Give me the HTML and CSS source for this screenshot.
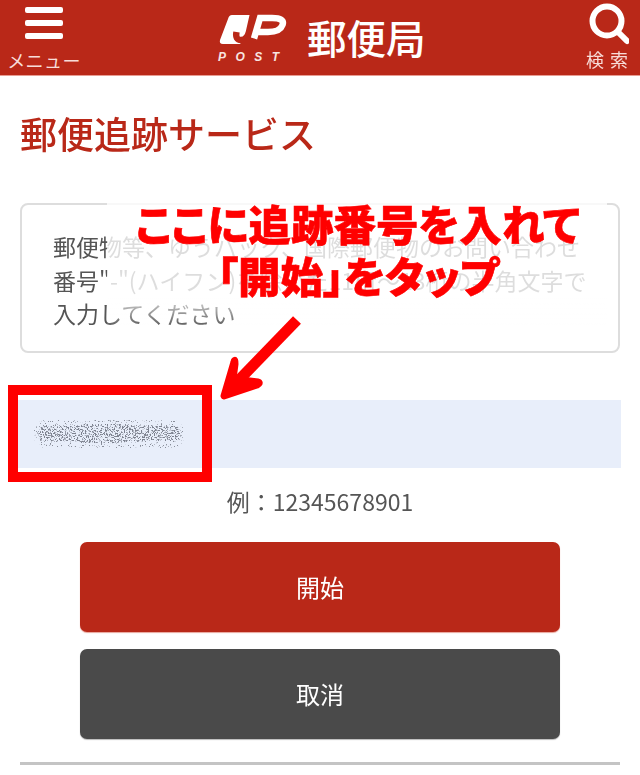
FILE: index.html
```html
<!DOCTYPE html>
<html lang="ja">
<head>
<meta charset="utf-8">
<title>郵便追跡サービス</title>
<link rel="stylesheet" href="styles.css">
</head>
<body>
<div class="page">
  <header class="header">
    <div class="menu">
      <span class="bars"><i></i><i></i><i></i></span>
      <span class="menu-label">メニュー</span>
    </div>
    <div class="brand">
      <div class="logo">
        <svg class="logo-mark" width="70" height="32" viewBox="218 13 70 32" aria-hidden="true">
          <path d="M232 15H255L247 44H223Q219 44 220 40L228 19Q229 15 232 15Z" fill="#fff"/>
          <path d="M254 10L249 32Q247 40 241 40Q235 40 236.500 32" fill="none" stroke="#b92818" stroke-width="6.500"/>
          <path d="M254 10L249 32Q247 40 241 40L240 46H262V10Z" fill="#b92818"/>
          <path d="M254 38.500L260 18H272Q285 18 282.500 25Q280 32 268 32H258" fill="none" stroke="#fff" stroke-width="6.500"/>
        </svg>
        <span class="logo-post">POST</span>
      </div>
      <span class="brand-name">郵便局</span>
    </div>
    <div class="search">
      <svg class="search-icon" width="44" height="46" viewBox="0 0 44 46" aria-hidden="true">
        <circle cx="22" cy="21" r="14.500" fill="none" stroke="#fff" stroke-width="6"/>
        <path d="M33 32L42 41" fill="none" stroke="#fff" stroke-width="6" stroke-linecap="round"/>
      </svg>
      <span class="search-label">検索</span>
    </div>
  </header>

  <main class="main">
    <h1 class="title">郵便追跡サービス</h1>
    <div class="info">郵便物等、ゆうパック、国際郵便物のお問い合わせ<br>番号"-"(ハイフン)を除いた11桁〜13桁の半角文字で<br>入力してください</div>
    <div class="field">
      <svg class="scribble" width="150" height="30" viewBox="0 0 150 30" aria-hidden="true">
        <filter id="grain" x="0" y="0" width="100%" height="100%">
          <feTurbulence type="fractalNoise" baseFrequency="0.7" numOctaves="2" seed="7"/>
          <feColorMatrix type="matrix" values="0 0 0 0 0.2  0 0 0 0 0.22  0 0 0 0 0.27  0 0 0 9 -4.700"/>
          <feComposite in2="SourceAlpha" operator="in"/>
          <feGaussianBlur stdDeviation="0.3"/>
        </filter>
        <filter id="specks" x="0" y="0" width="100%" height="100%">
          <feTurbulence type="fractalNoise" baseFrequency="0.8" numOctaves="1" seed="11"/>
          <feColorMatrix type="matrix" values="0 0 0 0 0.25  0 0 0 0 0.27  0 0 0 0 0.32  0 0 0 12 -7.400"/>
          <feComposite in2="SourceAlpha" operator="in"/>
        </filter>
        <rect x="0" y="1" width="150" height="28" rx="12" filter="url(#specks)"/>
        <g filter="url(#grain)">
          <rect x="3" y="7" width="144" height="15" rx="7"/>
          <rect x="40" y="5" width="60" height="19" rx="8"/>
        </g>
      </svg>
    </div>
    <p class="example">例：12345678901</p>
    <div class="actions">
      <button class="btn btn-start">開始</button>
      <button class="btn btn-cancel">取消</button>
    </div>
    <hr class="rule">
  </main>

  <div class="veil"></div>
  <div class="note">
    <div class="note-line">ここに追跡番号を入れて</div>
    <div class="note-line">「開始」をタップ</div>
  </div>
  <svg class="arrow" width="110" height="110" viewBox="205 300 110 110" aria-hidden="true">
    <path d="M297 320L237 382" fill="none" stroke="#f00" stroke-width="11"/>
    <path d="M224 396L234 362Q235 358 235 364L233 379L258 382Q261 383 257 385Z" fill="#f00" stroke="#f00" stroke-width="7" stroke-linejoin="round"/>
  </svg>
  <div class="frame"></div>
</div>
</body>
</html>
```

FILE: styles.css
```css
* { box-sizing: border-box; }
html, body { margin: 0; padding: 0; background: #fff; }
body {
  width: 640px;
  height: 775px;
  overflow: hidden;
  font-family: "Noto Sans CJK JP", "Noto Sans", sans-serif;
}
.page {
  position: relative;
  width: 640px;
  height: 775px;
  filter: blur(0.45px);
}

/* header */
.header {
  display: flex;
  align-items: flex-start;
  height: 76px;
  background: #b92818;
  border-bottom: 1px solid #e89c92;
  color: #fff;
}
.menu {
  display: flex;
  flex-direction: column;
  align-items: center;
  width: 72px;
  margin-left: 8px;
  padding-top: 7px;
}
.bars { display: flex; flex-direction: column; gap: 7px; }
.bars i {
  display: block;
  width: 38px;
  height: 6px;
  border-radius: 2px;
  background: #fff;
}
.menu-label {
  margin-top: 9px;
  font-size: 18px;
  line-height: 24px;
  letter-spacing: 0.400px;
  white-space: nowrap;
  color: #f8dcd8;
}
.brand {
  display: flex;
  align-items: flex-start;
  margin-left: 138px;
  margin-right: auto;
}
.logo {
  display: flex;
  flex-direction: column;
  width: 70px;
  padding-top: 13px;
}
.logo-mark { display: block; }
.logo-post {
  margin-top: 5px;
  font-family: "Liberation Sans", sans-serif;
  font-size: 12px;
  line-height: 14px;
  font-weight: 700;
  font-style: italic;
  letter-spacing: 9.500px;
  color: #f8e4e0;
}
.brand-name {
  margin-left: 19px;
  margin-top: 9px;
  font-size: 39.500px;
  line-height: 56px;
  font-weight: 500;
}
.search {
  display: flex;
  flex-direction: column;
  align-items: center;
  width: 44px;
  margin-right: 11px;
}
.search-icon { display: block; }
.search-label {
  margin-top: 1px;
  margin-right: -6px;
  font-size: 18px;
  line-height: 24px;
  letter-spacing: 6px;
  white-space: nowrap;
  color: #f8dcd8;
}

/* content */
.main { padding: 0 20px; }
.title {
  margin: 29px 0 0;
  font-size: 37px;
  line-height: 56px;
  font-weight: 500;
  color: #b92818;
}
.info {
  height: 150px;
  margin-top: 42px;
  padding: 25px 20px 0 31px;
  border: 2px solid #ddd;
  border-radius: 8px;
  font-size: 23px;
  line-height: 33.500px;
  color: #555;
  white-space: nowrap;
}
.field {
  display: flex;
  align-items: center;
  height: 68px;
  margin: 47px -1px 0 -2px;
  padding-left: 16px;
  background: #e8eefa;
}
.scribble { display: block; margin-top: -1px; }
.example {
  margin: 17px 0 0;
  font-size: 23px;
  line-height: 32px;
  text-align: center;
  color: #555;
}
.actions {
  display: flex;
  flex-direction: column;
  gap: 17px;
  margin: 25px 60px 0;
}
.btn {
  display: block;
  width: 100%;
  height: 90px;
  padding: 0 0 2px;
  border: 0;
  border-radius: 7px;
  font-family: inherit;
  font-size: 24px;
  color: #fff;
}
.btn-start { background: #b92818; box-shadow: 0 1px 1px #e8a49a; }
.btn-cancel { background: #4a4a4a; box-shadow: 0 1px 1px #bbb; }
.rule {
  height: 3px;
  margin: 23px 0 0;
  border: 0;
  background: #c4c4c4;
}

/* annotation overlay */
.veil {
  position: absolute;
  left: 107px;
  top: 198px;
  width: 500px;
  height: 130px;
  background: linear-gradient(to bottom, rgba(255,255,255,.8) 0, rgba(255,255,255,.8) 100px, rgba(255,255,255,0) 130px);
}
.note {
  position: absolute;
  left: 100px;
  top: 197px;
  width: 516px;
  color: #f00;
  font-size: 42.500px;
  font-weight: 900;
  text-align: center;
  font-feature-settings: "palt";
  -webkit-text-stroke: 0.600px #f00;
}
.note-line { line-height: 52px; white-space: nowrap; }
.arrow { position: absolute; left: 205px; top: 300px; }
.frame {
  position: absolute;
  left: 8px;
  top: 385px;
  width: 204px;
  height: 97px;
  border: 10px solid #f00;
}
```
